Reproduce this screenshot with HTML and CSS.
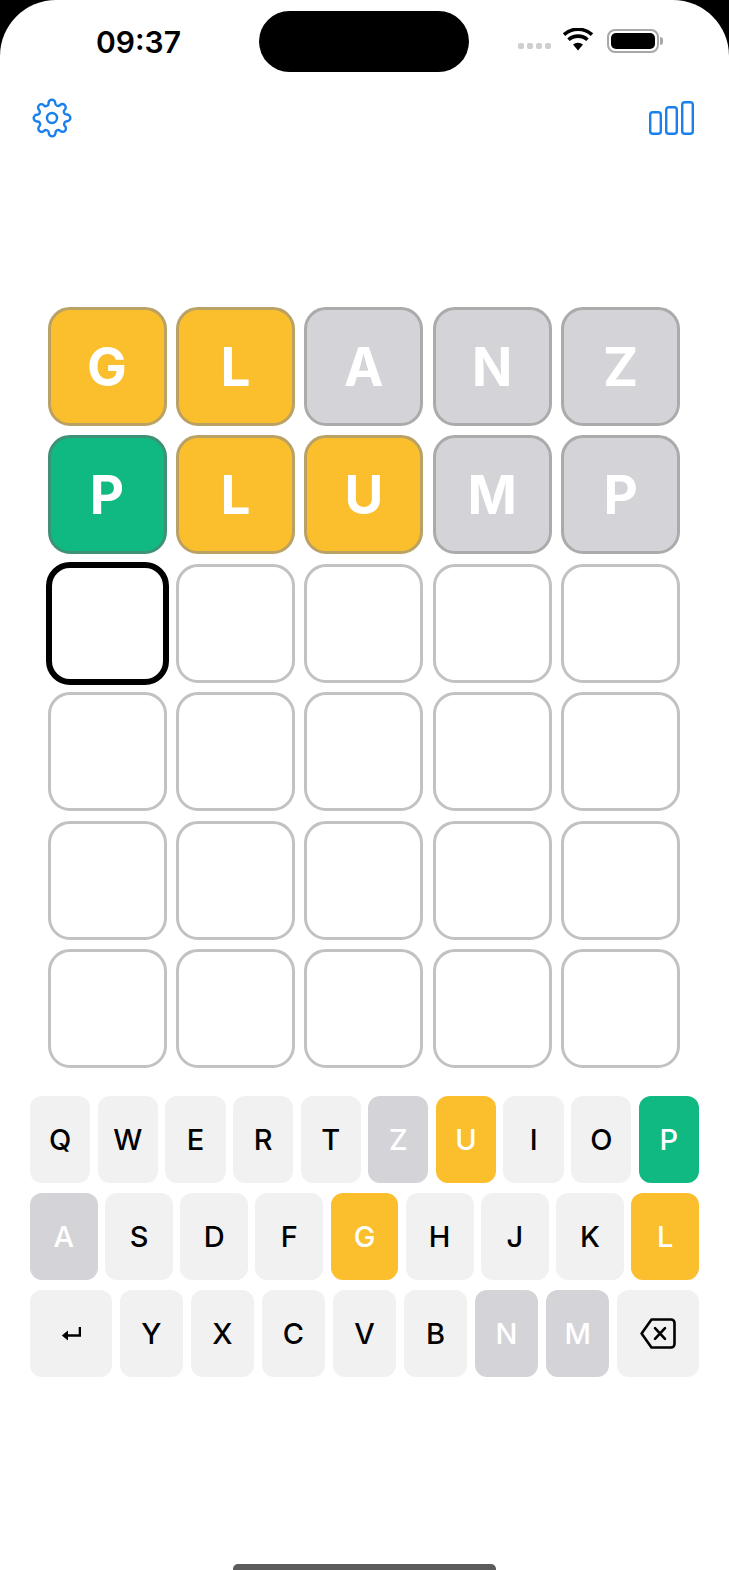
FILE: index.html
```html
<!DOCTYPE html>
<html lang="en">
<head>
    <meta charset="UTF-8">
    <meta name="viewport" content="width=device-width, initial-scale=1.0">
    <title>Word Game</title>
    <link rel="stylesheet" href="styles.css">
</head>
<body>
    <div class="screen">
        <div class="status-bar">
            <span class="time">09:37</span>
            <div class="island"></div>
            <div class="status-icons">
                <div class="signal"><i></i><i></i><i></i><i></i></div>
                <svg class="wifi" width="32" height="23" viewBox="0 0 32 23">
                    <path d="M16 22.5 11 16.6a7.6 7.6 0 0 1 10 0Z" fill="#000"/>
                    <path d="M6.5 11.8a14 14 0 0 1 19 0" fill="none" stroke="#000" stroke-width="3.6"/>
                    <path d="M2 6.6a21 21 0 0 1 28 0" fill="none" stroke="#000" stroke-width="3.6"/>
                </svg>
                <div class="battery"><div class="battery-fill"></div></div>
                <div class="battery-cap"></div>
            </div>
        </div>

        <div class="toolbar">
            <svg width="40" height="40" viewBox="0 0 24 24" fill="none" stroke="#1a80ee" stroke-width="1.45" stroke-linejoin="round">
                <circle cx="12" cy="12" r="3"/>
                <path d="M19.4 15a1.65 1.65 0 0 0 .33 1.82l.06.06a2 2 0 1 1-2.83 2.83l-.06-.06a1.65 1.65 0 0 0-2.82 1.17V21a2 2 0 1 1-4 0v-.09a1.65 1.65 0 0 0-2.82-1.2l-.06.06a2 2 0 1 1-2.83-2.83l.06-.06a1.65 1.65 0 0 0-1.17-2.82H3a2 2 0 1 1 0-4h.09a1.65 1.65 0 0 0 1.2-2.82l-.06-.06a2 2 0 1 1 2.83-2.83l.06.06a1.65 1.65 0 0 0 2.82-1.17V3a2 2 0 1 1 4 0v.09a1.65 1.65 0 0 0 2.82 1.2l.06-.06a2 2 0 1 1 2.83 2.83l-.06.06a1.65 1.65 0 0 0 1.17 2.82H21a2 2 0 1 1 0 4h-.09a1.65 1.65 0 0 0-1.51 1.06Z"/>
            </svg>
            <svg width="46" height="34" viewBox="0 0 46 34" fill="none" stroke="#1a80ee" stroke-width="2.4">
                <rect x="1.2" y="11.2" width="10.6" height="21.6" rx="2.6"/>
                <rect x="17.2" y="6.2" width="10.6" height="26.6" rx="2.6"/>
                <rect x="33.2" y="1.2" width="10.6" height="31.6" rx="2.6"/>
            </svg>
        </div>

        <div class="board">
            <div class="cell yellow">G</div>
            <div class="cell yellow">L</div>
            <div class="cell gray">A</div>
            <div class="cell gray">N</div>
            <div class="cell gray">Z</div>

            <div class="cell green">P</div>
            <div class="cell yellow">L</div>
            <div class="cell yellow">U</div>
            <div class="cell gray">M</div>
            <div class="cell gray">P</div>

            <div class="cell active"></div>
            <div class="cell"></div>
            <div class="cell"></div>
            <div class="cell"></div>
            <div class="cell"></div>

            <div class="cell"></div>
            <div class="cell"></div>
            <div class="cell"></div>
            <div class="cell"></div>
            <div class="cell"></div>

            <div class="cell"></div>
            <div class="cell"></div>
            <div class="cell"></div>
            <div class="cell"></div>
            <div class="cell"></div>

            <div class="cell"></div>
            <div class="cell"></div>
            <div class="cell"></div>
            <div class="cell"></div>
            <div class="cell"></div>
        </div>

        <div class="keyboard">
            <div class="key-row">
                <div class="key">Q</div>
                <div class="key">W</div>
                <div class="key">E</div>
                <div class="key">R</div>
                <div class="key">T</div>
                <div class="key gray">Z</div>
                <div class="key yellow">U</div>
                <div class="key">I</div>
                <div class="key">O</div>
                <div class="key green">P</div>
            </div>
            <div class="key-row">
                <div class="key gray">A</div>
                <div class="key">S</div>
                <div class="key">D</div>
                <div class="key">F</div>
                <div class="key yellow">G</div>
                <div class="key">H</div>
                <div class="key">J</div>
                <div class="key">K</div>
                <div class="key yellow">L</div>
            </div>
            <div class="key-row">
                <div class="key wide">
                    <svg width="20" height="15" viewBox="0 0 20 15" fill="none" stroke="#000" stroke-width="2.6">
                        <path d="M19 1v8.5H4"/>
                        <path d="M0.8 9.5 7 4.6v9.8Z" fill="#000" stroke="none"/>
                    </svg>
                </div>
                <div class="key">Y</div>
                <div class="key">X</div>
                <div class="key">C</div>
                <div class="key">V</div>
                <div class="key">B</div>
                <div class="key gray">N</div>
                <div class="key gray">M</div>
                <div class="key wide">
                    <svg width="36" height="31" viewBox="0 0 36 31" fill="none" stroke="#000" stroke-width="2.6" stroke-linejoin="round" stroke-linecap="round">
                        <path d="M11.5 1.5H31a3.5 3.5 0 0 1 3.5 3.5v21a3.5 3.5 0 0 1-3.5 3.5H11.5L1.6 15.5Z"/>
                        <path d="M15 10.2 25 20.8M25 10.2 15 20.8"/>
                    </svg>
                </div>
            </div>
        </div>

        <div class="home-bar"></div>
    </div>
</body>
</html>
```

FILE: styles.css
```css
* {
    box-sizing: border-box;
}

html, body {
    margin: 0;
    padding: 0;
    height: 100%;
}

body {
    background-color: #000;
    font-family: Inter, "Liberation Sans", sans-serif;
    overflow: hidden;
}

.screen {
    height: 1570px;
    background-color: #fff;
    border-radius: 56px 56px 0 0;
    display: flex;
    flex-direction: column;
    position: relative;
}

/* Status bar */
.status-bar {
    height: 72px;
    padding-top: 11px;
    display: flex;
    align-items: flex-start;
}

.time {
    width: 259px;
    padding: 14px 0 0 96px;
    font-size: 30px;
    line-height: 34px;
    font-weight: 600;
    color: #000;
}

.island {
    width: 210px;
    height: 61px;
    background-color: #000;
    border-radius: 31px;
}

.status-icons {
    display: flex;
    align-items: center;
    padding: 18px 0 0 49px;
}

.signal {
    display: flex;
    gap: 3px;
    margin: 9px 11px 0 0;
}

.signal i {
    width: 6px;
    height: 6px;
    border-radius: 2px;
    background-color: #cfcfcf;
}

.wifi {
    margin: -4px 13px 0 0;
}

.battery {
    width: 52px;
    height: 24px;
    border: 2px solid #a8a8a8;
    border-radius: 8px;
    padding: 2px;
}

.battery-fill {
    height: 100%;
    background-color: #000;
    border-radius: 5px;
}

.battery-cap {
    width: 3px;
    height: 8px;
    margin-left: 1px;
    background-color: #a8a8a8;
    border-radius: 0 3px 3px 0;
}

/* Top icons */
.toolbar {
    display: flex;
    justify-content: space-between;
    align-items: center;
    padding: 0 34px 0 32px;
    margin-top: 26px;
    height: 40px;
}

/* Board */
.board {
    display: grid;
    grid-template-columns: repeat(5, 119px);
    grid-auto-rows: 119px;
    gap: 9.4px;
    margin: 169px 0 0 47.5px;
}

.cell {
    display: flex;
    align-items: center;
    justify-content: center;
    border: 3px solid #c2c2c2;
    border-radius: 22px;
    font-size: 53px;
    font-weight: 700;
    color: #fff;
}

.cell.yellow {
    background-color: #fbbe2d;
    border-color: #b9a263;
}

.cell.green {
    background-color: #10b981;
    border-color: #3e9177;
}

.cell.gray {
    background-color: #d4d4d8;
    border-color: #ababab;
}

.cell.active {
    border: 6px solid #000;
    margin: -2px;
    border-radius: 24px;
}

/* Keyboard */
.keyboard {
    display: flex;
    flex-direction: column;
    gap: 10px;
    margin: 28px 30px 0;
}

.key-row {
    display: flex;
    gap: 7.4px;
}

.key {
    flex: 1;
    height: 87px;
    display: flex;
    align-items: center;
    justify-content: center;
    background-color: #f1f1f2;
    border-radius: 12px;
    font-size: 29px;
    font-weight: 500;
    color: #000;
}

.key.wide {
    flex: 1.29;
}

.key.yellow {
    background-color: #fbbe2d;
    color: #fff;
}

.key.green {
    background-color: #10b981;
    color: #fff;
}

.key.gray {
    background-color: #d4d4d8;
    color: #fff;
}

/* Home indicator */
.home-bar {
    position: absolute;
    left: 233px;
    bottom: 0;
    width: 263px;
    height: 6px;
    background-color: #5c5c5c;
    border-radius: 5px 5px 0 0;
}
```
